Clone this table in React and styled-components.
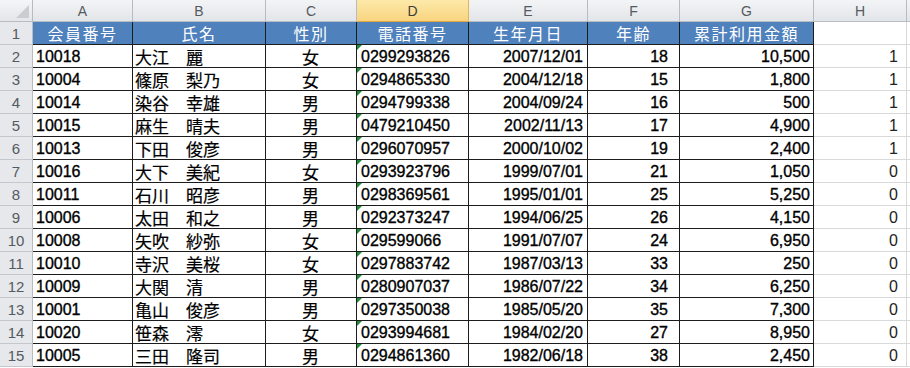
import React from 'react'
import styled, { createGlobalStyle } from 'styled-components'

const GlobalStyle = createGlobalStyle`
  html, body {
    margin: 0;
    padding: 0;
    background: #ffffff;
    overflow: hidden;
  }
  * { box-sizing: border-box; }
`

const Sheet = styled.div`
  display: grid;
  grid-template-columns: 33px 100px 133px 91px 112px 119px 92px 134px 93px 1fr;
  grid-template-rows: 22px;
  grid-auto-rows: 23px;
  width: 910px;
  height: 368px;
  overflow: hidden;
  font-family: "Liberation Sans", "Noto Sans CJK JP", sans-serif;
`

const Corner = styled.div`
  position: relative;
  background: linear-gradient(#f4f5f7, #e3e6ea);
  border-right: 1px solid #b7bcc3;
  border-bottom: 1px solid #b7bcc3;
  &::after {
    content: '';
    position: absolute;
    right: 3px;
    bottom: 3px;
    border-left: 13px solid transparent;
    border-bottom: 13px solid #c9ccd1;
  }
`

const ColHead = styled.div`
  display: flex;
  align-items: center;
  justify-content: center;
  padding-top: 1px;
  font-size: 14px;
  color: ${p => (p.$active ? '#3c3c3c' : '#555a60')};
  background: ${p => (p.$active ? 'linear-gradient(#fde9a9, #f8d47f)' : 'linear-gradient(#f3f4f6, #e2e5e9)')};
  border-right: 1px solid ${p => (p.$active ? '#e2b65a' : '#b7bcc3')};
  border-bottom: 1px solid ${p => (p.$active ? '#e0a93e' : '#b7bcc3')};
`

const RowHead = styled.div`
  display: flex;
  align-items: center;
  justify-content: center;
  font-size: 15px;
  color: #555a60;
  background: #e6e8ec;
  border-right: 1px solid #b7bcc3;
  border-bottom: 1px solid #c4c8ce;
`

const Cell = styled.div`
  position: relative;
  display: flex;
  align-items: center;
  justify-content: ${p => (p.$align === 'right' ? 'flex-end' : p.$align === 'center' ? 'center' : 'flex-start')};
  padding: 1px ${p => p.$pr ?? 3}px 0 ${p => p.$pl ?? 3}px;
  white-space: pre;
  overflow: hidden;
  font-size: 16px;
  color: #000;
  -webkit-text-stroke: 0.35px #000;
  background: #fff;
  border-right: 1px solid #1c1c1c;
  border-bottom: 1px solid #1c1c1c;
`

const TitleCell = styled(Cell)`
  justify-content: center;
  padding: 0;
  font-family: "Noto Sans CJK JP", sans-serif;
  font-size: 16px;
  letter-spacing: 1.5px;
  color: #fff;
  -webkit-text-stroke: 0;
  background: #4f81bd;
`

const NameCell = styled(Cell)`
  font-family: "Noto Sans CJK JP", sans-serif;
  font-size: 17px;
  padding-left: 2px;
  -webkit-text-stroke: 0.2px #000;
`

const PhoneCell = styled(Cell)`
  &::before {
    content: '';
    position: absolute;
    left: 0;
    top: 0;
    border-top: 5px solid #1f8a3a;
    border-right: 5px solid transparent;
  }
`

const PlainCell = styled(Cell)`
  border-right: 1px solid #d9d9d9;
  border-bottom: 1px solid #d9d9d9;
  color: #222;
  -webkit-text-stroke: 0;
`

const letters = ['A', 'B', 'C', 'D', 'E', 'F', 'G', 'H', '']
const titles = ['会員番号', '氏名', '性別', '電話番号', '生年月日', '年齢', '累計利用金額']

const members = [
  ['10018', '大江　麗', '女', '0299293826', '2007/12/01', '18', '10,500', 1],
  ['10004', '篠原　梨乃', '女', '0294865330', '2004/12/18', '15', '1,800', 1],
  ['10014', '染谷　幸雄', '男', '0294799338', '2004/09/24', '16', '500', 1],
  ['10015', '麻生　晴夫', '男', '0479210450', '2002/11/13', '17', '4,900', 1],
  ['10013', '下田　俊彦', '男', '0296070957', '2000/10/02', '19', '2,400', 1],
  ['10016', '大下　美紀', '女', '0293923796', '1999/07/01', '21', '1,050', 0],
  ['10011', '石川　昭彦', '男', '0298369561', '1995/01/01', '25', '5,250', 0],
  ['10006', '太田　和之', '男', '0292373247', '1994/06/25', '26', '4,150', 0],
  ['10008', '矢吹　紗弥', '女', '029599066', '1991/07/07', '24', '6,950', 0],
  ['10010', '寺沢　美桜', '女', '0297883742', '1987/03/13', '33', '250', 0],
  ['10009', '大関　清', '男', '0280907037', '1986/07/22', '34', '6,250', 0],
  ['10001', '亀山　俊彦', '男', '0297350038', '1985/05/20', '35', '7,300', 0],
  ['10020', '笹森　澪', '女', '0293994681', '1984/02/20', '27', '8,950', 0],
  ['10005', '三田　隆司', '男', '0294861360', '1982/06/18', '38', '2,450', 0],
]

const App = () => {
  return (
    <>
      <GlobalStyle />
      <Sheet>
        <Corner />
        {letters.map((l, i) => (
          <ColHead key={i} $active={l === 'D'}>{l}</ColHead>
        ))}

        <RowHead>1</RowHead>
        {titles.map(t => (
          <TitleCell key={t}>{t}</TitleCell>
        ))}
        <PlainCell />
        <PlainCell />

        {members.map((m, i) => (
          <React.Fragment key={m[0]}>
            <RowHead>{i + 2}</RowHead>
            <Cell>{m[0]}</Cell>
            <NameCell>{m[1]}</NameCell>
            <NameCell $align="center">{m[2]}</NameCell>
            <PhoneCell $pl={4}>{m[3]}</PhoneCell>
            <Cell $align="right" $pr={4}>{m[4]}</Cell>
            <Cell $align="right" $pr={11}>{m[5]}</Cell>
            <Cell $align="right" $pr={3}>{m[6]}</Cell>
            <PlainCell $align="right" $pr={8}>{m[7]}</PlainCell>
            <PlainCell />
          </React.Fragment>
        ))}
      </Sheet>
    </>
  )
}

export default App
